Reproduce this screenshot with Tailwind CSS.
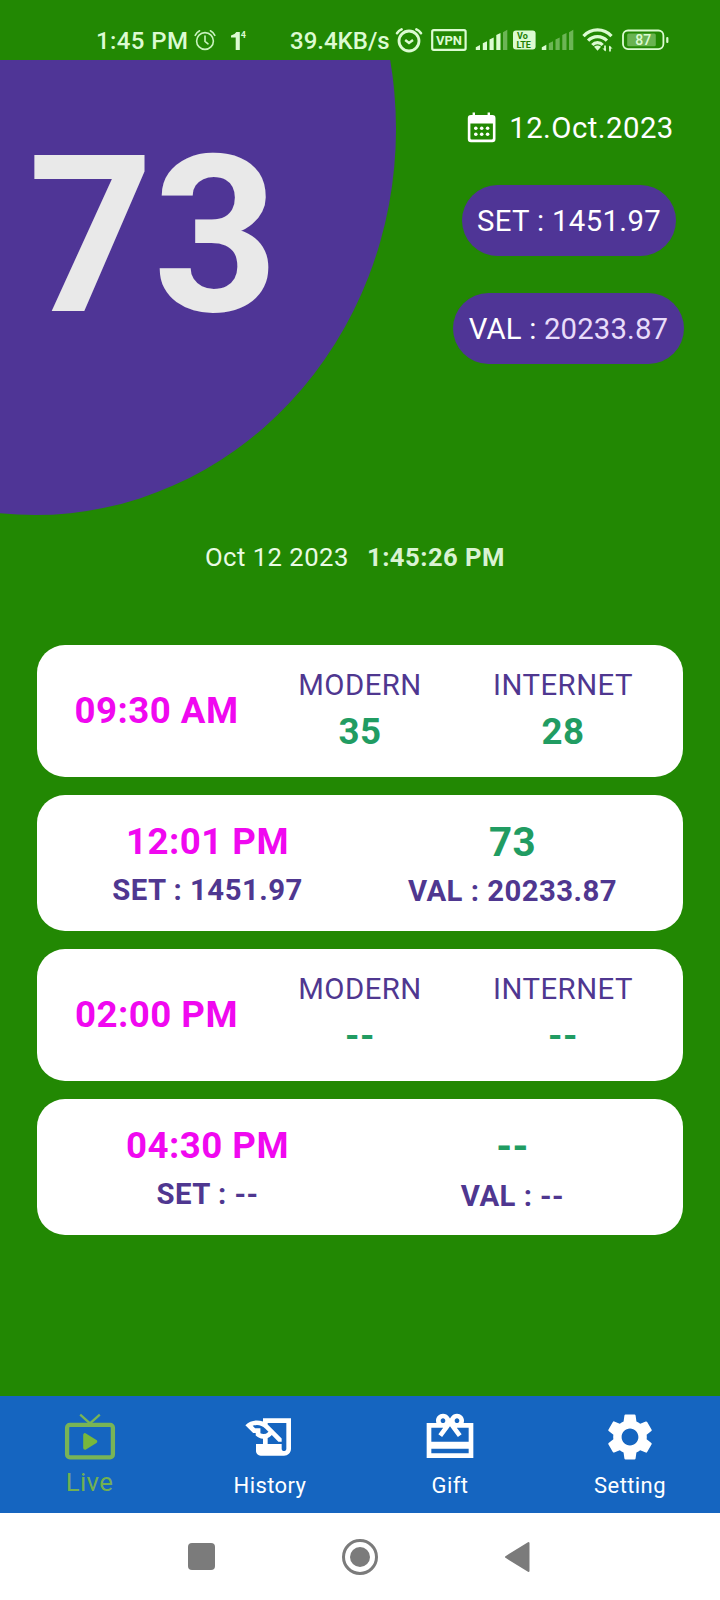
<!DOCTYPE html>
<html lang="en">
<head>
<meta charset="utf-8">
<title>Live</title>
<script src="https://cdn.jsdelivr.net/npm/@tailwindcss/browser@4"></script>
</head>
<body class="flex h-[1600px] w-[720px] flex-col overflow-hidden bg-[#228803] font-['Roboto',sans-serif] tracking-[0.46px]">

  <!-- Status bar -->
  <header class="flex h-[60px] shrink-0 items-center pt-[20px] text-[24px] leading-[28px] font-medium whitespace-nowrap text-[#dcfbd2]">
    <span class="ml-[96px] w-[98px] shrink-0 pt-[2px] tracking-[0.4px]">1:45 PM</span>
    <svg class="shrink-0" width="22" height="22" viewBox="0 0 22 22" fill="none" stroke="#c9f3bf" stroke-width="1.6" stroke-linecap="round">
      <circle cx="11" cy="12" r="8.4"/><path d="M11 7v5.4l3 2.4M1.2 6.4 A10 10 0 0 1 5.6 1.8M20.8 6.4 A10 10 0 0 0 16.4 1.8"/>
    </svg>
    <svg class="ml-[13px] shrink-0" width="20" height="24" viewBox="0 0 20 24" fill="#dcfbd2">
      <path d="M2 7.4Q6 6.600 7.400 4H10.800V22H6.700V9.400H2z"/>
      <text x="11.8" y="9.5" font-size="9" font-weight="700" letter-spacing="0">4</text>
    </svg>
    <span class="ml-[41px] w-[105px] shrink-0 pt-[2px] tracking-normal">39.4KB/s</span>
    <svg class="shrink-0" width="28" height="26" viewBox="0 0 28 26" fill="none" stroke="#dcfbd2" stroke-linecap="round">
      <circle cx="14" cy="14" r="10" stroke-width="2.8"/><path d="M10.2 13l3.800 3 4-3" stroke-width="2.4" stroke-linecap="butt"/><path d="M2 6.2Q3.800 3.600 6.600 2.400M26 6.200Q24.200 3.600 21.400 2.400" stroke-width="2.6"/>
    </svg>
    <svg class="ml-[8px] shrink-0" width="36" height="22" viewBox="0 0 36 22" fill="#dcfbd2">
      <rect x="1.2" y="1.2" width="33.4" height="19.6" rx="1.5" fill="none" stroke="#dcfbd2" stroke-width="2.2"/>
      <text x="18" y="15.9" font-size="13" font-weight="700" text-anchor="middle" letter-spacing="0">VPN</text>
    </svg>
    <svg class="ml-[8px] shrink-0" width="34" height="22" viewBox="0 0 34 22" fill="#dcfbd2">
      <path d="M.8 21v-2.800l4.200-2.200v5zM7.800 21v-6.700l4.200-2V21zM14.500 21V10.500l4.200-2V21zM21.300 21V6l4.200-2v17z"/><path opacity=".4" d="M28 21V3.200l4.300-2.400V21z"/>
    </svg>
    <svg class="ml-[3px] shrink-0" width="24" height="20" viewBox="0 0 24 20">
      <rect x="1" y="0.5" width="22.6" height="19" rx="3" fill="#dcfbd2"/>
      <g fill="#1f7f05" font-size="9" font-weight="700" letter-spacing="0"><text x="5" y="9">Vo</text><text x="4.4" y="17.6">LTE</text></g>
    </svg>
    <svg class="ml-[5px] shrink-0" width="34" height="22" viewBox="0 0 34 22" fill="#dcfbd2">
      <path d="M.8 21v-2.800l4.500-2.400V21z"/><path opacity=".4" d="M7.800 21v-6.700l4.200-2V21zM14.500 21V10.500l4.200-2V21zM21.300 21V6l4.200-2v17zM28 21V3.200l4.300-2.400V21z"/>
    </svg>
    <svg class="ml-[7px] shrink-0" width="32" height="24" viewBox="0 0 32 24" fill="none" stroke="#dcfbd2" stroke-width="3.2">
      <path d="M1.5 8.100a19 19 0 0 1 28 0M6.100 12.700a12.800 12.800 0 0 1 18.800 0M10.300 17a7 7 0 0 1 10.400 0"/>
      <path d="M12 18.800q3.500-2.400 7 0L15.500 22.800z" fill="#dcfbd2" stroke="none"/>
      <path d="M23 17.500v5M28 23.500v-5" stroke-width="1.700"/><path d="M20.400 20.600h3.400v3zM30.600 20.400h-3.400v-3z" fill="#dcfbd2" stroke="none"/>
    </svg>
    <svg class="ml-[8px] shrink-0" width="48" height="22" viewBox="0 0 48 22" fill="#dcfbd2">
      <rect x="1" y="1.5" width="40.4" height="18.6" rx="5" fill="none" stroke="#dcfbd2" stroke-width="1.8"/>
      <rect x="5.2" y="4.6" width="28.6" height="12.6" rx="1.5" opacity=".38"/>
      <rect x="44.2" y="8" width="2.2" height="6" rx="1"/>
      <text x="21.3" y="15.8" font-size="14" font-weight="500" text-anchor="middle" letter-spacing="0">87</text>
    </svg>
  </header>

  <!-- Current result -->
  <section class="flex h-[456px] shrink-0 justify-between">
    <div class="relative h-full w-[420px] overflow-hidden">
      <div class="absolute top-[-317px] left-[-326px] h-[772px] w-[722px] rounded-[50%] bg-[#4f3596]"></div>
      <p class="relative pt-[66px] pl-[28px] text-[219px] leading-[220px] font-bold tracking-[-0.6px] text-[#e9e9e9]">73</p>
    </div>
    <div class="mr-[35px] flex w-[232px] flex-col items-center whitespace-nowrap text-[29.33px] leading-[36px] text-white">
      <div class="mt-[49px] flex h-[36px] items-center pl-[3px]">
        <svg width="30" height="32" viewBox="0 0 30 32" fill="#fff">
          <path fill-rule="evenodd" d="M4 4h1.6V1.5h2.4V4H20.600V1.500H23V4h2.200A3.200 3.200 0 0 1 28.500 7.200V28A3.200 3.200 0 0 1 25.300 31.200H4A3.200 3.200 0 0 1 .8 28V7.200A3.200 3.200 0 0 1 4 4zM3.400 12.600V27.200Q3.400 28.500 4.700 28.500H24.600Q25.900 28.500 25.900 27.200V12.600z"/>
          <circle cx="8.800" cy="17.300" r="1.800"/><circle cx="14.700" cy="17.300" r="1.800"/><circle cx="20.600" cy="17.300" r="1.800"/>
          <circle cx="8.800" cy="23.200" r="1.800"/><circle cx="14.700" cy="23.200" r="1.800"/><circle cx="20.600" cy="23.200" r="1.800"/>
        </svg>
        <span class="ml-[12px] pt-[1px]">12.Oct.2023</span>
      </div>
      <div class="mt-[40px] flex h-[71px] w-[214px] items-center justify-center rounded-full bg-[#4f3596]"><span class="pt-[1px] tracking-[0.35px]">SET : 1451.97</span></div>
      <div class="mt-[37px] mr-[1px] flex h-[71px] w-[231px] items-center justify-center rounded-full bg-[#4f3596]"><span class="pt-[1px] tracking-[0.15px]">VAL : <span class="text-[#e8dcfa]">20233.87</span></span></div>
    </div>
  </section>

  <p class="mt-[25px] flex h-[32px] shrink-0 pl-[205px] text-[25.67px] leading-[32px] whitespace-nowrap text-[#e9fbe4]">
    <span class="w-[162px]">Oct 12 2023</span><b class="font-bold text-[#d9f3d3]">1:45:26 PM</b>
  </p>

  <!-- Results by time -->
  <main class="mx-[37px] mt-[72px] flex shrink-0 flex-col gap-[18px] text-center text-[29.33px] whitespace-nowrap text-[#4f3790]">
    <article class="flex h-[132px] rounded-[28px] bg-white">
      <div class="flex w-[239px] items-center justify-center pb-[1px] text-[36.67px] leading-[44px] font-bold text-[#f008f0]">09:30 AM</div>
      <div class="w-[168px] pt-[22px]"><p class="leading-[36px]">MODERN</p><p class="mt-[7px] text-[36.67px] leading-[44px] font-bold text-[#219c62]">35</p></div>
      <div class="w-[238px] pt-[22px]"><p class="leading-[36px]">INTERNET</p><p class="mt-[7px] text-[36.67px] leading-[44px] font-bold text-[#219c62]">28</p></div>
    </article>
    <article class="flex h-[136px] rounded-[28px] bg-white font-bold">
      <div class="w-[341px] pt-[25px]"><p class="text-[36.67px] leading-[44px] text-[#f008f0]">12:01 PM</p><p class="mt-[9px] leading-[34px]">SET : 1451.97</p></div>
      <div class="w-[269px] pt-[25px]"><p class="text-[40.33px] leading-[46px] text-[#219c62]">73</p><p class="mt-[8px] leading-[34px]">VAL : 20233.87</p></div>
    </article>
    <article class="flex h-[132px] rounded-[28px] bg-white">
      <div class="flex w-[239px] items-center justify-center pb-[1px] text-[36.67px] leading-[44px] font-bold text-[#f008f0]">02:00 PM</div>
      <div class="w-[168px] pt-[22px]"><p class="leading-[36px]">MODERN</p><p class="mt-[7px] text-[36.67px] leading-[44px] font-bold text-[#219c62]">--</p></div>
      <div class="w-[238px] pt-[22px]"><p class="leading-[36px]">INTERNET</p><p class="mt-[7px] text-[36.67px] leading-[44px] font-bold text-[#219c62]">--</p></div>
    </article>
    <article class="flex h-[136px] rounded-[28px] bg-white font-bold">
      <div class="w-[341px] pt-[25px]"><p class="text-[36.67px] leading-[44px] text-[#f008f0]">04:30 PM</p><p class="mt-[9px] leading-[34px]">SET : --</p></div>
      <div class="w-[269px] pt-[25px]"><p class="text-[40.33px] leading-[46px] text-[#219c62]">--</p><p class="mt-[9px] leading-[34px]">VAL : --</p></div>
    </article>
  </main>

  <!-- Tabs -->
  <nav class="mt-auto grid h-[117px] shrink-0 grid-cols-4 bg-[#1565c0] text-[22px] leading-[26px] tracking-[0.4px] text-white">
    <a class="flex flex-col items-center pt-[17px] text-[25.67px] leading-[30px] text-[#72b052]">
      <svg width="52" height="48" viewBox="0 0 52 48" fill="none" stroke="#78b456">
        <rect x="3.100" y="11.900" width="45.800" height="32.500" rx="2.800" stroke-width="4.300"/>
        <path d="M16.200 1.600 26 10.400 35.800 1.600" stroke-width="2.300"/>
        <path d="M21 22v13L31.500 28.500z" fill="#78b83c" stroke="#78b83c" stroke-width="3.600" stroke-linejoin="round"/>
      </svg>
      <span class="mt-[6px] mr-[1px]">Live</span>
    </a>
    <a class="flex flex-col items-center pt-[13px]">
      <svg width="56" height="56" viewBox="0 0 24 24" fill="#fff"><path d="M9 4v1.380c-.83-.33-1.720-.5-2.610-.5-1.790 0-3.580.68-4.950 2.050l3.330 3.330h1.110v1.110c.86.86 1.980 1.310 3.110 1.360V15H6v3c0 1.100.9 2 2 2h10c1.660 0 3-1.340 3-3V4H9zm-1.110 6.410V8.260H5.610L4.570 7.220a5.070 5.070 0 0 1 1.820-.34c1.340 0 2.590.52 3.540 1.460l1.410 1.410-.2.2a2.700 2.700 0 0 1-1.920.8c-.47 0-.93-.12-1.330-.34zM19 17c0 .55-.45 1-1 1s-1-.45-1-1v-2h-6v-2.590c.57-.23 1.100-.57 1.560-1.030l.2-.2L15.590 14H17v-1.410l-6-5.970V6h8v11z"/></svg>
      <span class="mt-[8px]">History</span>
    </a>
    <a class="flex flex-col items-center pt-[13px]">
      <svg width="56" height="56" viewBox="0 0 24 24" fill="#fff"><path d="M22 6h-4.180c.11-.31.18-.65.18-1 0-1.660-1.340-3-3-3-1.050 0-1.960.54-2.500 1.350l-.5.67-.5-.68C10.960 2.540 10.050 2 9 2 7.340 2 6 3.340 6 5c0 .35.070.69.180 1H2v15h20V6zm-7-2c.55 0 1 .45 1 1s-.45 1-1 1-1-.45-1-1 .45-1 1-1zM9 4c.55 0 1 .45 1 1s-.45 1-1 1-1-.45-1-1 .45-1 1-1zm11 15H4v-2h16v2zm0-5H4V8h5.080L7 10.830 8.620 12 11 8.760l1-1.360 1 1.360L15.380 12 17 10.830 14.920 8H20v6z"/></svg>
      <span class="mt-[8px]">Gift</span>
    </a>
    <a class="flex flex-col items-center pt-[13px]">
      <svg width="56" height="56" viewBox="0 0 24 24" fill="#fff"><path d="M19.140 12.940c.04-.3.060-.61.060-.94 0-.32-.02-.64-.07-.94l2.030-1.580c.18-.14.23-.41.120-.61l-1.920-3.320c-.12-.22-.37-.29-.59-.22l-2.390.96c-.5-.38-1.030-.7-1.620-.94l-.36-2.540c-.04-.24-.24-.41-.48-.41h-3.840c-.24 0-.43.17-.47.41l-.36 2.540c-.59.24-1.130.57-1.620.94l-2.390-.96c-.22-.08-.47 0-.59.22L2.740 8.870c-.12.21-.08.47.120.61l2.030 1.580c-.05.3-.09.63-.09.94s.02.64.07.94l-2.030 1.580c-.18.14-.23.41-.12.61l1.920 3.320c.12.22.37.29.59.22l2.390-.96c.5.38 1.030.7 1.620.94l.36 2.540c.05.24.24.41.48.41h3.840c.24 0 .44-.17.47-.41l.36-2.540c.59-.24 1.130-.56 1.620-.94l2.390.96c.22.08.47 0 .59-.22l1.920-3.320c.12-.22.070-.47-.12-.61l-2.010-1.580zM12 15.600c-1.980 0-3.600-1.620-3.600-3.600s1.620-3.600 3.600-3.600 3.600 1.620 3.600 3.600-1.620 3.600-3.600 3.600z"/></svg>
      <span class="mt-[8px]">Setting</span>
    </a>
  </nav>

  <!-- System navigation -->
  <footer class="flex h-[87px] shrink-0 items-center bg-white pl-[188px]">
    <div class="size-[27px] rounded-[4px] bg-[#7b7b7b]"></div>
    <div class="ml-[127px] flex size-[36px] items-center justify-center rounded-full border-3 border-[#7b7b7b]"><div class="size-[20px] rounded-full bg-[#7b7b7b]"></div></div>
    <svg class="ml-[126px]" width="28" height="32" viewBox="0 0 28 32"><path d="M2 16 24.500 2v28z" fill="#7b7b7b" stroke="#7b7b7b" stroke-width="2" stroke-linejoin="round"/></svg>
  </footer>
</body>
</html>
